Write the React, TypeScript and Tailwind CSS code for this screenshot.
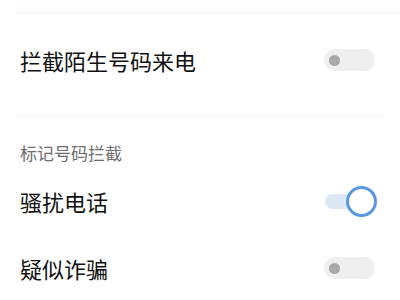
import React from 'react';

const font = { fontFamily: '"Noto Sans CJK SC", "Noto Sans", sans-serif' };

// Off switch: pale track with a small grey dot on the left
const OffSwitch = () => (
    <div className="w-[51px] h-[22px] rounded-full bg-[#efefef] flex items-center">
        <span className="ml-[5px] w-[11px] h-[11px] rounded-full bg-[#a9a9a9]"></span>
    </div>
);

// On switch: faint blue track with a ringed knob on the right
const OnSwitch = () => (
    <div className="relative w-[52px] h-[31px]">
        <span className="absolute left-0 top-[8px] w-[40px] h-[15px] rounded-full bg-[#dde8f7]"></span>
        <span className="absolute right-0 top-0 w-[31px] h-[31px] rounded-full border-[3px] border-[#5a98e2] bg-white"></span>
    </div>
);

const Row = ({ label, height, on }: { label: string; height: string; on?: boolean }) => (
    <div className={`${height} flex items-center justify-between pl-5 ${on ? 'pr-[23px]' : 'pr-[25px]'}`}>
        <span className="text-[22px] leading-none text-[#111111]">{label}</span>
        {on ? <OnSwitch /> : <OffSwitch />}
    </div>
);

export default function App() {
    return (
        <div className="w-[400px] h-[300px] bg-white overflow-hidden" style={font}>
            <div className="h-[7px]"></div>
            <div className="h-[8px] ml-4 bg-[#fbfbfb]"></div>
            <Row label="拦截陌生号码来电" height="h-[90px]" />
            <div className="h-[8px]"></div>
            <div className="h-[6px] ml-4 mr-4 bg-[#fbfbfb]"></div>
            <div className="h-[23px]"></div>
            <div className="h-[22px] flex items-center pl-5 text-[17px] text-[#6e6e6e]">标记号码拦截</div>
            <Row label="骚扰电话" height="h-[74px]" on />
            <Row label="疑似诈骗" height="h-[60px]" />
        </div>
    );
}
